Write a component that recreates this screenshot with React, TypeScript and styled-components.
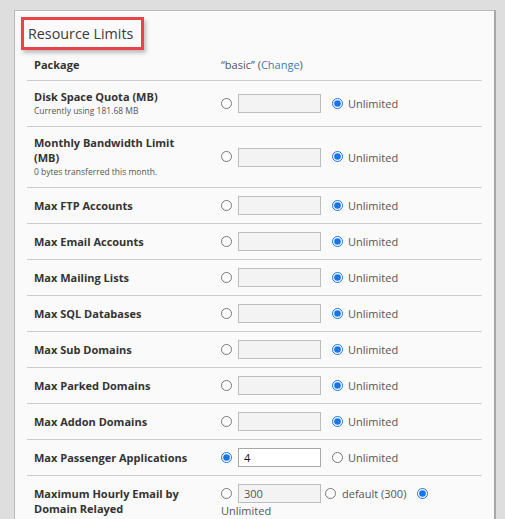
import React from "react";
import styled, { createGlobalStyle } from "styled-components";

const Global = createGlobalStyle`
  html, body { margin: 0; padding: 0; background: #dedede; }
  body { font-family: "Open Sans", "Noto Sans", Arial, sans-serif; color: #333; }
`;

const Page = styled.div`
  padding: 10px 9px 0 14px;
`;

const Panel = styled.section`
  background: #fafafa;
  border: 1px solid #b9b9b9;
  border-right: 2px solid #a9a9a9;
  border-bottom: none;
  padding: 6px 12px 0 12px;
  min-height: 520px;
`;

const TitleBox = styled.div`
  display: inline-block;
  margin-left: -6px;
  border: 3px solid #e8434a;
  padding: 2px 8px 2px 4px;
  box-shadow: 2px 3px 4px rgba(0, 0, 0, 0.25);
`;

const Title = styled.h2`
  margin: 0;
  font-size: 14.3px;
  line-height: 23px;
  font-weight: 400;
  color: #3a3a3a;
`;

const Table = styled.div`
  display: flex;
  flex-direction: column;
  margin-top: -1px;
`;

const Row = styled.div<{ $last?: boolean }>`
  display: grid;
  grid-template-columns: 194px 1fr;
  align-items: center;
  padding: 8px 0;
  border-bottom: ${(p) => (p.$last ? "none" : "1px solid #cdcdcd")};
`;

const LabelCell = styled.div`
  padding: 0 24px 0 7px;
`;

const Label = styled.div`
  font-size: 11px;
  line-height: 15px;
  font-weight: 700;
  color: #333;
`;

const Sub = styled.div`
  font-size: 8.5px;
  line-height: 14px;
  color: #555;
`;

const Controls = styled.div`
  display: flex;
  flex-wrap: wrap;
  align-items: center;
  row-gap: 0;
  padding-right: 4px;
  font-size: 11px;
  line-height: 15px;
  color: #555;
`;

const Radio = styled.input.attrs({ type: "radio" })<{ $gap?: number }>`
  width: 11px;
  height: 11px;
  margin: 0 ${(p) => p.$gap ?? 6}px 1px 0;
  accent-color: #1a73e8;
`;

const NumInput = styled.input.attrs({ type: "text" })<{ $active?: boolean; $gap?: number }>`
  box-sizing: border-box;
  width: 83px;
  height: 19px;
  margin: 0 ${(p) => p.$gap ?? 11}px 0 0;
  padding: 0 5px;
  border: 1px solid ${(p) => (p.$active ? "#a8a8a8" : "#bcbcbc")};
  background: ${(p) => (p.$active ? "#fff" : "#f3f3f3")};
  font-family: inherit;
  font-size: 11px;
  color: ${(p) => (p.$active ? "#111" : "#555")};
  outline: none;
`;

const OptText = styled.span<{ $gap?: number }>`
  margin-right: ${(p) => p.$gap ?? 0}px;
  color: #555;
`;

const Value = styled.span`
  font-size: 11px;
  color: #555;
`;

const Link = styled.a`
  color: #3d7ab8;
  text-decoration: none;
`;

type Item = { label: string; sub?: string; value?: string; checkedNum?: boolean };

const items: Item[] = [
  { label: "Disk Space Quota (MB)", sub: "Currently using 181.68 MB" },
  { label: "Monthly Bandwidth Limit (MB)", sub: "0 bytes transferred this month." },
  { label: "Max FTP Accounts" },
  { label: "Max Email Accounts" },
  { label: "Max Mailing Lists" },
  { label: "Max SQL Databases" },
  { label: "Max Sub Domains" },
  { label: "Max Parked Domains" },
  { label: "Max Addon Domains" },
  { label: "Max Passenger Applications", value: "4", checkedNum: true },
];

export default function App() {
  return (
    <>
      <Global />
      <Page>
        <Panel>
          <TitleBox>
            <Title>Resource Limits</Title>
          </TitleBox>
          <Table>
            <Row>
              <LabelCell>
                <Label>Package</Label>
              </LabelCell>
              <Value>
                “basic” (<Link href="#">Change</Link>)
              </Value>
            </Row>
            {items.map((it) => (
              <Row key={it.label}>
                <LabelCell>
                  <Label>{it.label}</Label>
                  {it.sub && <Sub>{it.sub}</Sub>}
                </LabelCell>
                <Controls>
                  <Radio name={it.label} defaultChecked={!!it.checkedNum} />
                  <NumInput $active={!!it.checkedNum} defaultValue={it.value ?? ""} />
                  <Radio name={it.label} $gap={5} defaultChecked={!it.checkedNum} />
                  <OptText>Unlimited</OptText>
                </Controls>
              </Row>
            ))}
            <Row $last>
              <LabelCell>
                <Label>Maximum Hourly Email by Domain Relayed</Label>
              </LabelCell>
              <Controls>
                <Radio name="hourly" />
                <NumInput defaultValue="300" $gap={4} />
                <Radio name="hourly" $gap={6} />
                <OptText $gap={11}>default (300)</OptText>
                <Radio name="hourly" defaultChecked />
                <OptText>Unlimited</OptText>
              </Controls>
            </Row>
          </Table>
        </Panel>
      </Page>
    </>
  );
}
